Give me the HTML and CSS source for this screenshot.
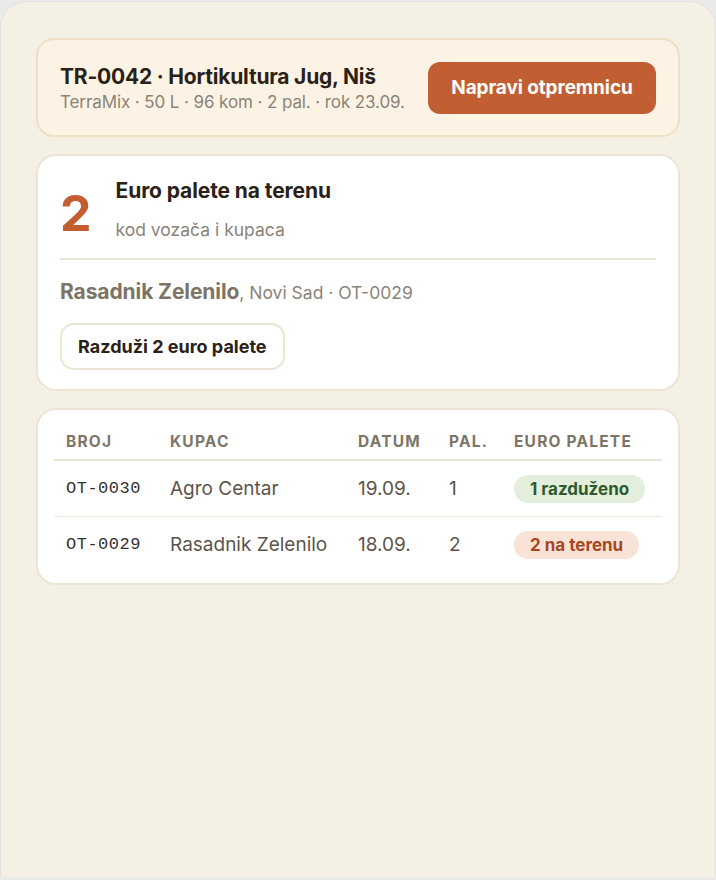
FILE: index.html
```html
<!DOCTYPE html>
<html lang="sr">
<head>
    <meta charset="UTF-8">
    <meta name="viewport" content="width=device-width, initial-scale=1.0">
    <title>Euro palete</title>
    <link rel="stylesheet" href="styles.css">
</head>
<body>
    <div class="panel">
        <div class="order-card">
            <div class="order-info">
                <h1>TR-0042 · Hortikultura Jug, Niš</h1>
                <p>TerraMix · 50 L · 96 kom · 2 pal. · rok 23.09.</p>
            </div>
            <button class="btn-primary">Napravi otpremnicu</button>
        </div>

        <div class="card pallets">
            <div class="pallets-head">
                <div class="big-count">2</div>
                <div>
                    <h2>Euro palete na terenu</h2>
                    <p>kod vozača i kupaca</p>
                </div>
            </div>
            <div class="pallets-body">
                <p class="holder"><strong>Rasadnik Zelenilo</strong>, Novi Sad · OT-0029</p>
                <button class="btn-outline">Razduži 2 euro palete</button>
            </div>
        </div>

        <div class="card list">
            <table>
                <thead>
                    <tr>
                        <th class="col-no">Broj</th>
                        <th class="col-client">Kupac</th>
                        <th class="col-date">Datum</th>
                        <th class="col-pal">Pal.</th>
                        <th>Euro palete</th>
                    </tr>
                </thead>
                <tbody>
                    <tr>
                        <td class="mono">OT-0030</td>
                        <td>Agro Centar</td>
                        <td>19.09.</td>
                        <td>1</td>
                        <td><span class="badge done">1 razduženo</span></td>
                    </tr>
                    <tr>
                        <td class="mono">OT-0029</td>
                        <td>Rasadnik Zelenilo</td>
                        <td>18.09.</td>
                        <td>2</td>
                        <td><span class="badge field">2 na terenu</span></td>
                    </tr>
                </tbody>
            </table>
        </div>
    </div>
</body>
</html>
```

FILE: styles.css
```css
body {
    margin: 0;
    background: #ebeaea;
    font-family: 'Inter', 'Noto Sans', sans-serif;
    color: #2a2118;
}
.panel {
    box-sizing: border-box;
    margin-top: 1px;
    height: 876px;
    background: #f5f0e4;
    border: 1px solid #e3e1e3;
    border-bottom: none;
    border-radius: 26px 26px 0 0;
    padding: 36px 35px;
    display: flex;
    flex-direction: column;
    gap: 17px;
}
.order-card {
    display: flex;
    justify-content: space-between;
    align-items: center;
    background: #fdf3e4;
    border: 2px solid #f1dfc4;
    border-radius: 18px;
    padding: 0 22px;
    height: 99px;
    box-sizing: border-box;
}
.order-info h1 {
    margin: 0;
    font-size: 21px;
    font-weight: 700;
    letter-spacing: -0.2px;
    line-height: 25px;
}
.order-info p {
    margin: 3px 0 0;
    font-size: 17px;
    color: #8a8378;
    letter-spacing: -0.1px;
}
button {
    font-family: inherit;
    cursor: pointer;
}
.btn-primary {
    background: #c15f32;
    color: #fff;
    border: none;
    border-radius: 12px;
    width: 228px;
    height: 52px;
    font-size: 19px;
    font-weight: 700;
    letter-spacing: -0.1px;
}
.card {
    background: #fff;
    border: 2px solid #ece5d5;
    border-radius: 20px;
    box-sizing: border-box;
}
.pallets {
    padding: 20px 22px 19px;
}
.pallets-head {
    display: flex;
    align-items: flex-start;
    gap: 24px;
    padding-bottom: 17px;
    border-bottom: 2px solid #ebe3d3;
}
.big-count {
    font-size: 50px;
    font-weight: 700;
    color: #c45e31;
    line-height: 1;
    margin-top: 12px;
}
.pallets-head h2 {
    margin: 2px 0 0;
    font-size: 21px;
    font-weight: 700;
    letter-spacing: -0.1px;
    line-height: 26px;
}
.pallets-head p {
    margin: 15px 0 0;
    font-size: 17.5px;
    color: #8a8378;
    line-height: 22px;
}
.holder {
    margin: 20px 0 18px;
    font-size: 17.5px;
    color: #8a8378;
    line-height: 24px;
}
.holder strong {
    font-size: 21px;
    color: #7d7466;
    letter-spacing: -0.1px;
}
.btn-outline {
    background: #fff;
    border: 2px solid #ece5d3;
    border-radius: 14px;
    height: 47px;
    padding: 0 16px;
    font-size: 18px;
    font-weight: 700;
    color: #2a2118;
}
.list {
    padding: 10px 16px 11px;
}
table {
    width: 100%;
    border-collapse: collapse;
}
th {
    text-align: left;
    font-size: 15.5px;
    font-weight: 700;
    text-transform: uppercase;
    letter-spacing: 1.2px;
    color: #7d7567;
    padding: 12px 12px 8px;
    border-bottom: 2px solid #ebe3d3;
}
.col-no { width: 80px; }
.col-client { width: 164px; }
.col-date { width: 67px; }
.col-pal { width: 41px; }
td {
    font-size: 19px;
    color: #5c544a;
    padding: 0 12px;
    height: 55px;
}
tbody tr + tr td {
    border-top: 1px solid #ede7da;
}
td.mono {
    font-family: 'Liberation Mono', monospace;
    font-size: 17px;
    color: #35322e;
    letter-spacing: 0.5px;
}
.badge {
    display: inline-block;
    padding: 4px 16px;
    border-radius: 999px;
    font-size: 17px;
    font-weight: 700;
}
.badge.done {
    background: #e3eedc;
    color: #2f5a2c;
}
.badge.field {
    background: #f9e2d6;
    color: #a9461f;
}
```
